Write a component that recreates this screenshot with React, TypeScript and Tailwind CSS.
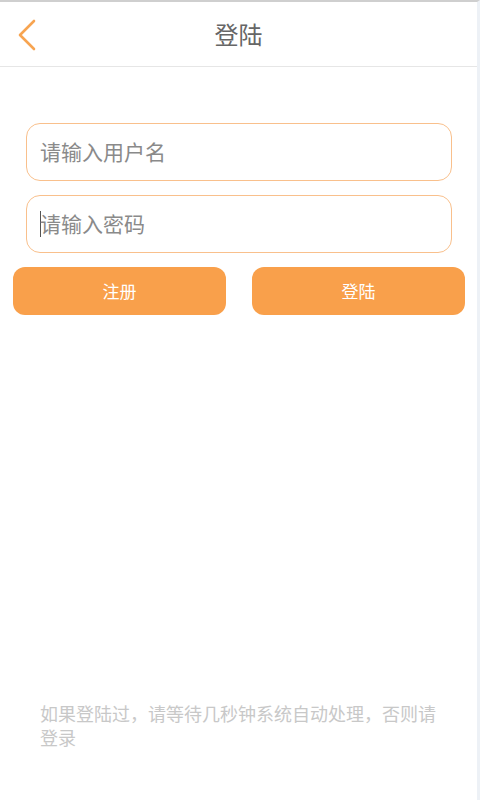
import React from "react";

export default function App() {
  return (
    <div
      className="w-[480px] h-[800px] bg-white flex flex-col border-t-2 border-t-[#cfcfcf] border-r-[3px] border-r-[#edf1f6] overflow-hidden"
      style={{ fontFamily: '"Noto Sans CJK SC", "Noto Sans", sans-serif' }}
    >
      <div className="h-[65px] flex items-center relative border-b border-[#e6e6e6]">
        <svg className="absolute left-[14px] top-[15px]" width="26" height="36" viewBox="0 0 26 36">
          <polyline points="20,4 6,18 20,32" fill="none" stroke="#f7a451" strokeWidth="2.6" strokeLinecap="round" strokeLinejoin="round" />
        </svg>
        <div className="flex-1 text-center text-[24px] text-[#666] leading-none">登陆</div>
      </div>

      <div className="flex flex-col mt-[56px]">
        <div className="ml-[26px] w-[426px] h-[58px] rounded-[14px] border border-[#f9c08c] flex items-center pl-[13px] text-[21px] text-[#8a8a8a]">
          请输入用户名
        </div>
        <div className="ml-[26px] mt-[14px] w-[426px] h-[58px] rounded-[14px] border border-[#f9c08c] flex items-center pl-[13px] text-[21px] text-[#8a8a8a]">
          <span className="w-px h-[26px] bg-[#555] -mr-px" />
          请输入密码
        </div>
        <div className="flex mt-[14px] pl-[13px] gap-[26px]">
          <div className="w-[213px] h-[48px] rounded-[12px] bg-[#f9a04b] flex items-center justify-center text-white text-[17px]">
            注册
          </div>
          <div className="w-[213px] h-[48px] rounded-[12px] bg-[#f9a04b] flex items-center justify-center text-white text-[17px]">
            登陆
          </div>
        </div>
      </div>

      <div className="mt-auto mb-[51px] ml-[40px] w-[405px] text-[18px] leading-[24px] text-[#c8c8c8]">
        如果登陆过，请等待几秒钟系统自动处理，否则请登录
      </div>
    </div>
  );
}
